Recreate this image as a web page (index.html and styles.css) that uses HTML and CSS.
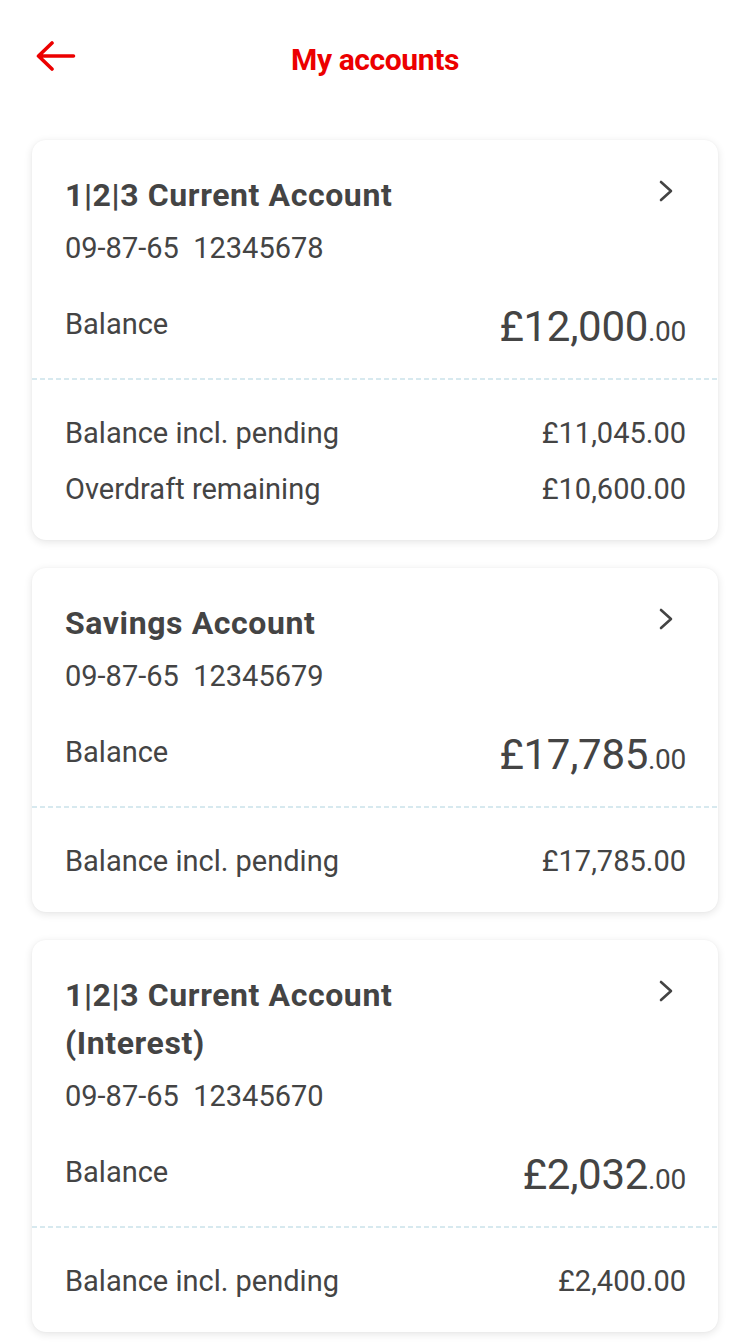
FILE: index.html
```html
<!DOCTYPE html>
<html lang="en">
<head>
<meta charset="utf-8">
<title>My accounts</title>
<link rel="stylesheet" href="styles.css">
</head>
<body>
<header class="topbar">
  <div class="topbar-left">
    <svg class="back-icon" width="40" height="32" viewBox="0 0 40 32" aria-hidden="true">
      <path d="M37.5 16 H3 M16 3 L2.5 16 L16 29" fill="none" stroke="#ec0000" stroke-width="3.6" stroke-linecap="round" stroke-linejoin="round"/>
    </svg>
  </div>
  <h1 class="topbar-title">My accounts</h1>
  <div class="topbar-right"></div>
</header>

<main class="accounts">
  <section class="card">
    <div class="card-main">
      <div class="card-head">
        <h2 class="card-title">1|2|3 Current Account</h2>
        <svg class="chevron" width="16" height="24" viewBox="0 0 16 24" aria-hidden="true">
          <path d="M3 3 L13 12 L3 21" fill="none" stroke="#444" stroke-width="2.6" stroke-linecap="round" stroke-linejoin="round"/>
        </svg>
      </div>
      <p class="card-number">09-87-65&nbsp;&nbsp;12345678</p>
      <div class="balance-row">
        <span class="balance-label">Balance</span>
        <span class="balance-amount">£12,000<span class="cents">.00</span></span>
      </div>
    </div>
    <div class="divider"></div>
    <div class="card-details">
      <div class="detail-row"><span>Balance incl. pending</span><span>£11,045.00</span></div>
      <div class="detail-row"><span>Overdraft remaining</span><span>£10,600.00</span></div>
    </div>
  </section>

  <section class="card">
    <div class="card-main">
      <div class="card-head">
        <h2 class="card-title">Savings Account</h2>
        <svg class="chevron" width="16" height="24" viewBox="0 0 16 24" aria-hidden="true">
          <path d="M3 3 L13 12 L3 21" fill="none" stroke="#444" stroke-width="2.6" stroke-linecap="round" stroke-linejoin="round"/>
        </svg>
      </div>
      <p class="card-number">09-87-65&nbsp;&nbsp;12345679</p>
      <div class="balance-row">
        <span class="balance-label">Balance</span>
        <span class="balance-amount">£17,785<span class="cents">.00</span></span>
      </div>
    </div>
    <div class="divider"></div>
    <div class="card-details">
      <div class="detail-row"><span>Balance incl. pending</span><span>£17,785.00</span></div>
    </div>
  </section>

  <section class="card">
    <div class="card-main">
      <div class="card-head">
        <h2 class="card-title">1|2|3 Current Account (Interest)</h2>
        <svg class="chevron" width="16" height="24" viewBox="0 0 16 24" aria-hidden="true">
          <path d="M3 3 L13 12 L3 21" fill="none" stroke="#444" stroke-width="2.6" stroke-linecap="round" stroke-linejoin="round"/>
        </svg>
      </div>
      <p class="card-number">09-87-65&nbsp;&nbsp;12345670</p>
      <div class="balance-row">
        <span class="balance-label">Balance</span>
        <span class="balance-amount">£2,032<span class="cents">.00</span></span>
      </div>
    </div>
    <div class="divider"></div>
    <div class="card-details">
      <div class="detail-row"><span>Balance incl. pending</span><span>£2,400.00</span></div>
    </div>
  </section>
</main>
</body>
</html>
```

FILE: styles.css
```css
* {
  box-sizing: border-box;
}

html, body {
  margin: 0;
  padding: 0;
  background: #ffffff;
}

body {
  font-family: "Roboto", "Noto Sans", sans-serif;
  color: #444444;
  width: 750px;
}

.topbar {
  display: grid;
  grid-template-columns: 1fr auto 1fr;
  align-items: center;
  height: 112px;
}

.topbar-left {
  padding-left: 36px;
  display: flex;
  align-items: center;
}

.back-icon {
  display: block;
}

.topbar-title {
  margin: 0;
  padding-top: 8px;
  font-size: 30px;
  line-height: 40px;
  font-weight: 700;
  color: #ec0000;
  letter-spacing: -0.4px;
}

.accounts {
  display: flex;
  flex-direction: column;
  gap: 28px;
  padding: 28px 32px 40px;
}

.card {
  background: #ffffff;
  border-radius: 14px;
  box-shadow: 0 2px 8px rgba(0, 0, 0, 0.11), 0 0 2px rgba(0, 0, 0, 0.04);
}

.card-main {
  padding: 31px 32px 21px 33px;
}

.card-head {
  display: flex;
  justify-content: space-between;
  align-items: flex-start;
}

.card-title {
  margin: 0;
  max-width: 420px;
  font-size: 32px;
  line-height: 48px;
  font-weight: 700;
  color: #444444;
  letter-spacing: 0.6px;
}

.chevron {
  display: block;
  flex: none;
  margin-top: 8px;
  margin-right: 12px;
}

.card-number {
  margin: 9px 0 0;
  font-size: 29px;
  line-height: 40px;
}

.balance-row {
  display: flex;
  justify-content: space-between;
  align-items: flex-start;
  margin-top: 29px;
  height: 60px;
}

.balance-label {
  margin-top: 7px;
  font-size: 29px;
  line-height: 40px;
}

.balance-amount {
  font-size: 42px;
  line-height: 60px;
  letter-spacing: -0.3px;
}

.cents {
  font-size: 28px;
  line-height: 1;
}

.divider {
  height: 2px;
  background: repeating-linear-gradient(90deg, #d7e9ef 0 5px, transparent 5px 8px);
}

.card-details {
  padding: 25px 32px 23px 33px;
}

.detail-row {
  display: flex;
  justify-content: space-between;
  font-size: 29px;
  line-height: 56px;
}
```
